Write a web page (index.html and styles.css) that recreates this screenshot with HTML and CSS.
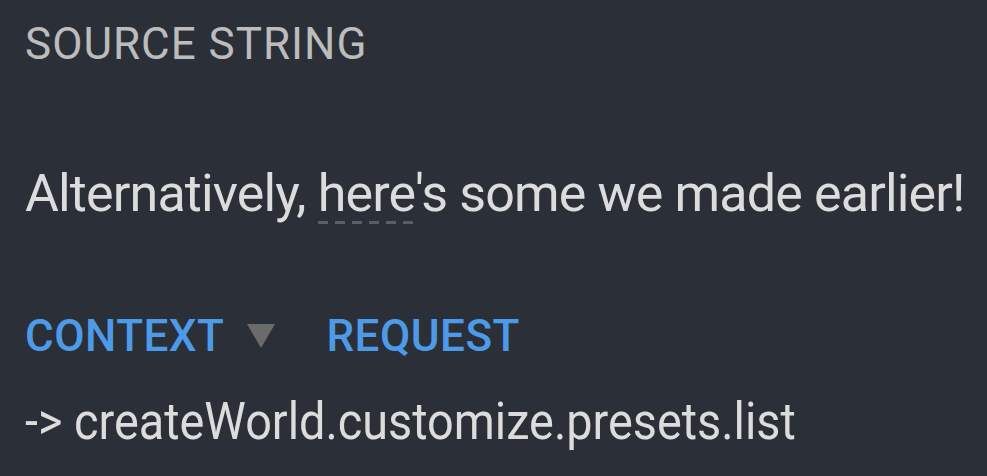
FILE: index.html
```html
<!DOCTYPE html>
<html lang="en">
<head>
  <meta charset="UTF-8">
  <title>Source string</title>
  <link rel="stylesheet" href="styles.css">
</head>
<body>

  <div class="panel">
    <!-- Source -->
    <div class="label">SOURCE STRING</div>
    <p class="source">Alternatively, <span class="term">here</span>'s some we made earlier!</p>

    <!-- Tabs -->
    <div class="tabs">
      <span class="tab">CONTEXT</span>
      <span class="caret"></span>
      <span class="tab">REQUEST</span>
    </div>
    <div class="context"><span class="key">-&gt; createWorld.customize.presets.list</span></div>
  </div>

</body>
</html>
```

FILE: styles.css
```css
body {
  margin: 0;
  background: #2b3038;
  font-family: Roboto, 'Noto Sans', sans-serif;
  color: #dcdcdc;
}

.panel {
  padding: 18px 25px;
}

.label {
  font-size: 44px;
  letter-spacing: 1px;
  color: #bcbcbc;
  line-height: 52px;
}

.source {
  font-size: 52px;
  letter-spacing: -0.85px;
  line-height: 60px;
  white-space: nowrap;
  margin: 94px 0 0;
}

.term {
  background: repeating-linear-gradient(to right, #5a5f66 0 10px, transparent 10px 17px) left bottom / 100% 3px no-repeat;
}

.tabs {
  display: flex;
  align-items: center;
  margin-top: 86px;
}

.tab {
  font-size: 44px;
  font-weight: 500;
  letter-spacing: 0.5px;
  color: #4d9be8;
}

.caret {
  width: 0;
  height: 0;
  border-left: 14px solid transparent;
  border-right: 14px solid transparent;
  border-top: 24px solid #6b6b6b;
  margin: 0 51px 0 23px;
}

.context {
  font-size: 52px;
  margin-top: 29px;
  white-space: nowrap;
}

.key {
  display: inline-block;
  transform: scaleX(0.9);
  transform-origin: left;
}
```
